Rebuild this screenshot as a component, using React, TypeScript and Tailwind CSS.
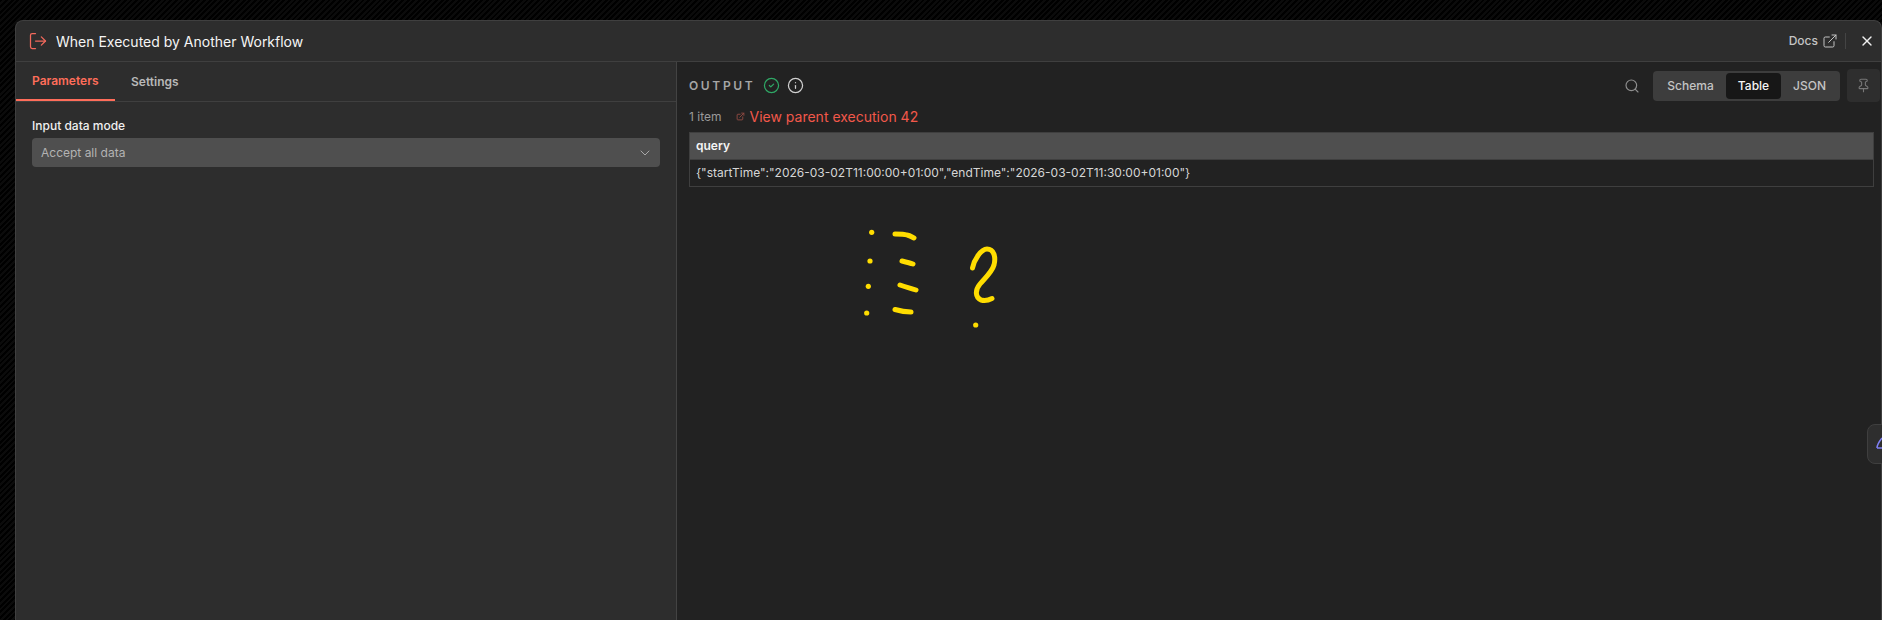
import React from 'react';
import { ChevronDown, ExternalLink, Info, LogOut, Pin, Search, X, CircleCheck } from 'lucide-react';

// yellow marker scribbles drawn over the output panel
function Scribbles() {
  return (
    <svg className="absolute left-[840px] top-[210px]" width="180" height="130" viewBox="0 0 180 130" fill="none">
      <g fill="#ffdd00">
        <circle cx="31.7" cy="22.3" r="2.6" />
        <circle cx="30" cy="51" r="2.6" />
        <circle cx="28.3" cy="76.3" r="2.6" />
        <circle cx="26.7" cy="103" r="2.6" />
        <circle cx="135.7" cy="115" r="2.6" />
      </g>
      <g stroke="#ffdd00" strokeWidth="5" strokeLinecap="round" strokeLinejoin="round">
        <path d="M55 24C60 24 64 24 67 25C70 25.500 72 27 74 28" />
        <path d="M62 51C66 52 70 53 73 54" />
        <path d="M60 75C65 77 70 78 76 80" />
        <path d="M55 99.500C60 101 65 102 71 102" />
        <path d="M132.500 58C134 50 141 39 147 39C154 39 156 47 154 55C152 62 145 68 140 74C135 80 135 87 141 90C145 91 149 90 152 88.500" />
      </g>
    </svg>
  );
}

export default function App() {
  return (
    <div className="relative h-[620px] w-[1882px] overflow-hidden bg-[repeating-linear-gradient(135deg,#000_0,#000_2px,#0b0b0b_2px,#0b0b0b_4px)] pl-[15px] pt-[20px] font-['Inter',sans-serif]">
      <div className="flex h-[640px] flex-col rounded-t-lg border border-b-0 border-[#3f3f3f] bg-[#2d2d2d]">
        {/* Header */}
        <div className="flex h-[41px] shrink-0 items-center justify-between border-b border-[#3f3f3f] pl-[12px] pr-[6px]">
          <div className="flex items-center gap-[8px]">
            <LogOut className="h-[20px] w-[20px] text-[#f2695c]" strokeWidth={1.5} />
            <span className="text-[14px] font-normal text-[#f5f5f5]">When Executed by Another Workflow</span>
          </div>
          <div className="flex items-center">
            <span className="text-[12px] font-medium text-[#c4c4c4]">Docs</span>
            <ExternalLink className="ml-[4px] h-[16px] w-[16px] text-[#c4c4c4]" strokeWidth={1.5} />
            <div className="ml-[7px] h-[16px] w-px bg-[#444444]" />
            <X className="ml-[13px] h-[16px] w-[16px] text-[#f0f0f0]" strokeWidth={2} />
          </div>
        </div>

        <div className="flex min-h-0 flex-1">
          {/* Parameters panel */}
          <div className="w-[661px] shrink-0 border-r border-[#434343]">
            <div className="flex h-[40px] items-stretch border-b border-[#3f3f3f] text-[12px] font-semibold">
              <div className="flex w-[99px] items-center border-b-2 border-[#ff6d5a] pl-[16px] text-[#ff6d5a]">Parameters</div>
              <div className="ml-[16px] flex items-center text-[#b8b8b8]">Settings</div>
            </div>
            <div className="px-[16px] pt-[16px]">
              <div className="text-[12px] font-medium leading-[16px] text-[#f0f0f0]">Input data mode</div>
              <div className="mt-[4px] flex h-[29px] items-center justify-between rounded bg-[#4f4f4f] pl-[9px] pr-[7px]">
                <span className="text-[12px] text-[#b3b3b3]">Accept all data</span>
                <ChevronDown className="h-[16px] w-[16px] text-[#a8a8a8]" strokeWidth={1.5} />
              </div>
            </div>
          </div>

          {/* Output panel */}
          <div className="min-w-0 flex-1 bg-[#222222]">
            <div className="flex h-[45px] items-center justify-between pl-[12px] pr-[1px] pt-[2px]">
              <div className="flex items-center">
                <span className="text-[12px] font-semibold tracking-[0.22em] text-[#a6a6a6]">OUTPUT</span>
                <CircleCheck className="ml-[8px] h-[17px] w-[17px] text-[#2fa866]" strokeWidth={1.75} />
                <Info className="ml-[7px] h-[17px] w-[17px] text-[#d0d0d0]" strokeWidth={1.75} />
              </div>
              <div className="flex items-center">
                <Search className="h-[16px] w-[16px] text-[#8f8f8f]" strokeWidth={1.75} />
                <div className="ml-[13px] flex h-[30px] items-center rounded bg-[#3d3d3d] px-[2px] text-[12px] font-medium text-[#c4c4c4]">
                  <div className="flex w-[71px] justify-center">Schema</div>
                  <div className="flex h-[26px] w-[55px] items-center justify-center rounded bg-[#171717] text-[#f5f5f5]">Table</div>
                  <div className="flex w-[57px] justify-center">JSON</div>
                </div>
                <div className="ml-[7px] flex h-[33px] w-[33px] items-center justify-center rounded bg-[#2e2e2e]">
                  <Pin className="h-[15px] w-[15px] text-[#777777]" strokeWidth={1.75} />
                </div>
              </div>
            </div>
            <div className="flex h-[19px] items-center pl-[12px]">
              <span className="text-[12px] text-[#9a9a9a]">1 item</span>
              <ExternalLink className="ml-[15px] h-[9px] w-[9px] text-[#8f4a42]" strokeWidth={2.5} />
              <span className="ml-[4px] text-[14px] text-[#f2584a]">View parent execution 42</span>
            </div>
            <div className="ml-[12px] mr-[7px] mt-[6px] border border-[#3f3f3f] text-[12px]">
              <div className="flex h-[26px] items-center bg-[#4f4f4f] pl-[6px] font-semibold text-[#f5f5f5]">query</div>
              <div className="flex h-[27px] items-center border-t border-[#3f3f3f] pl-[6px] text-[#d6d6d6]">
                {'{"startTime":"2026-03-02T11:00:00+01:00","endTime":"2026-03-02T11:30:00+01:00"}'}
              </div>
            </div>
          </div>
        </div>
      </div>

      <Scribbles />

      {/* Floating assistant tab at the right edge */}
      <div className="absolute left-[1867px] top-[424px] h-[40px] w-[30px] overflow-hidden rounded-l-lg border border-[#3f3f3f] bg-[#2e2e2e]">
        <svg className="absolute left-[8px] top-[10px]" width="16" height="16" viewBox="0 0 16 16" fill="none" stroke="#8080f5" strokeWidth="1.5">
          <path d="M1 13C1 11 2 8 6 3" />
          <path d="M1 13H8" />
        </svg>
      </div>
    </div>
  );
}
